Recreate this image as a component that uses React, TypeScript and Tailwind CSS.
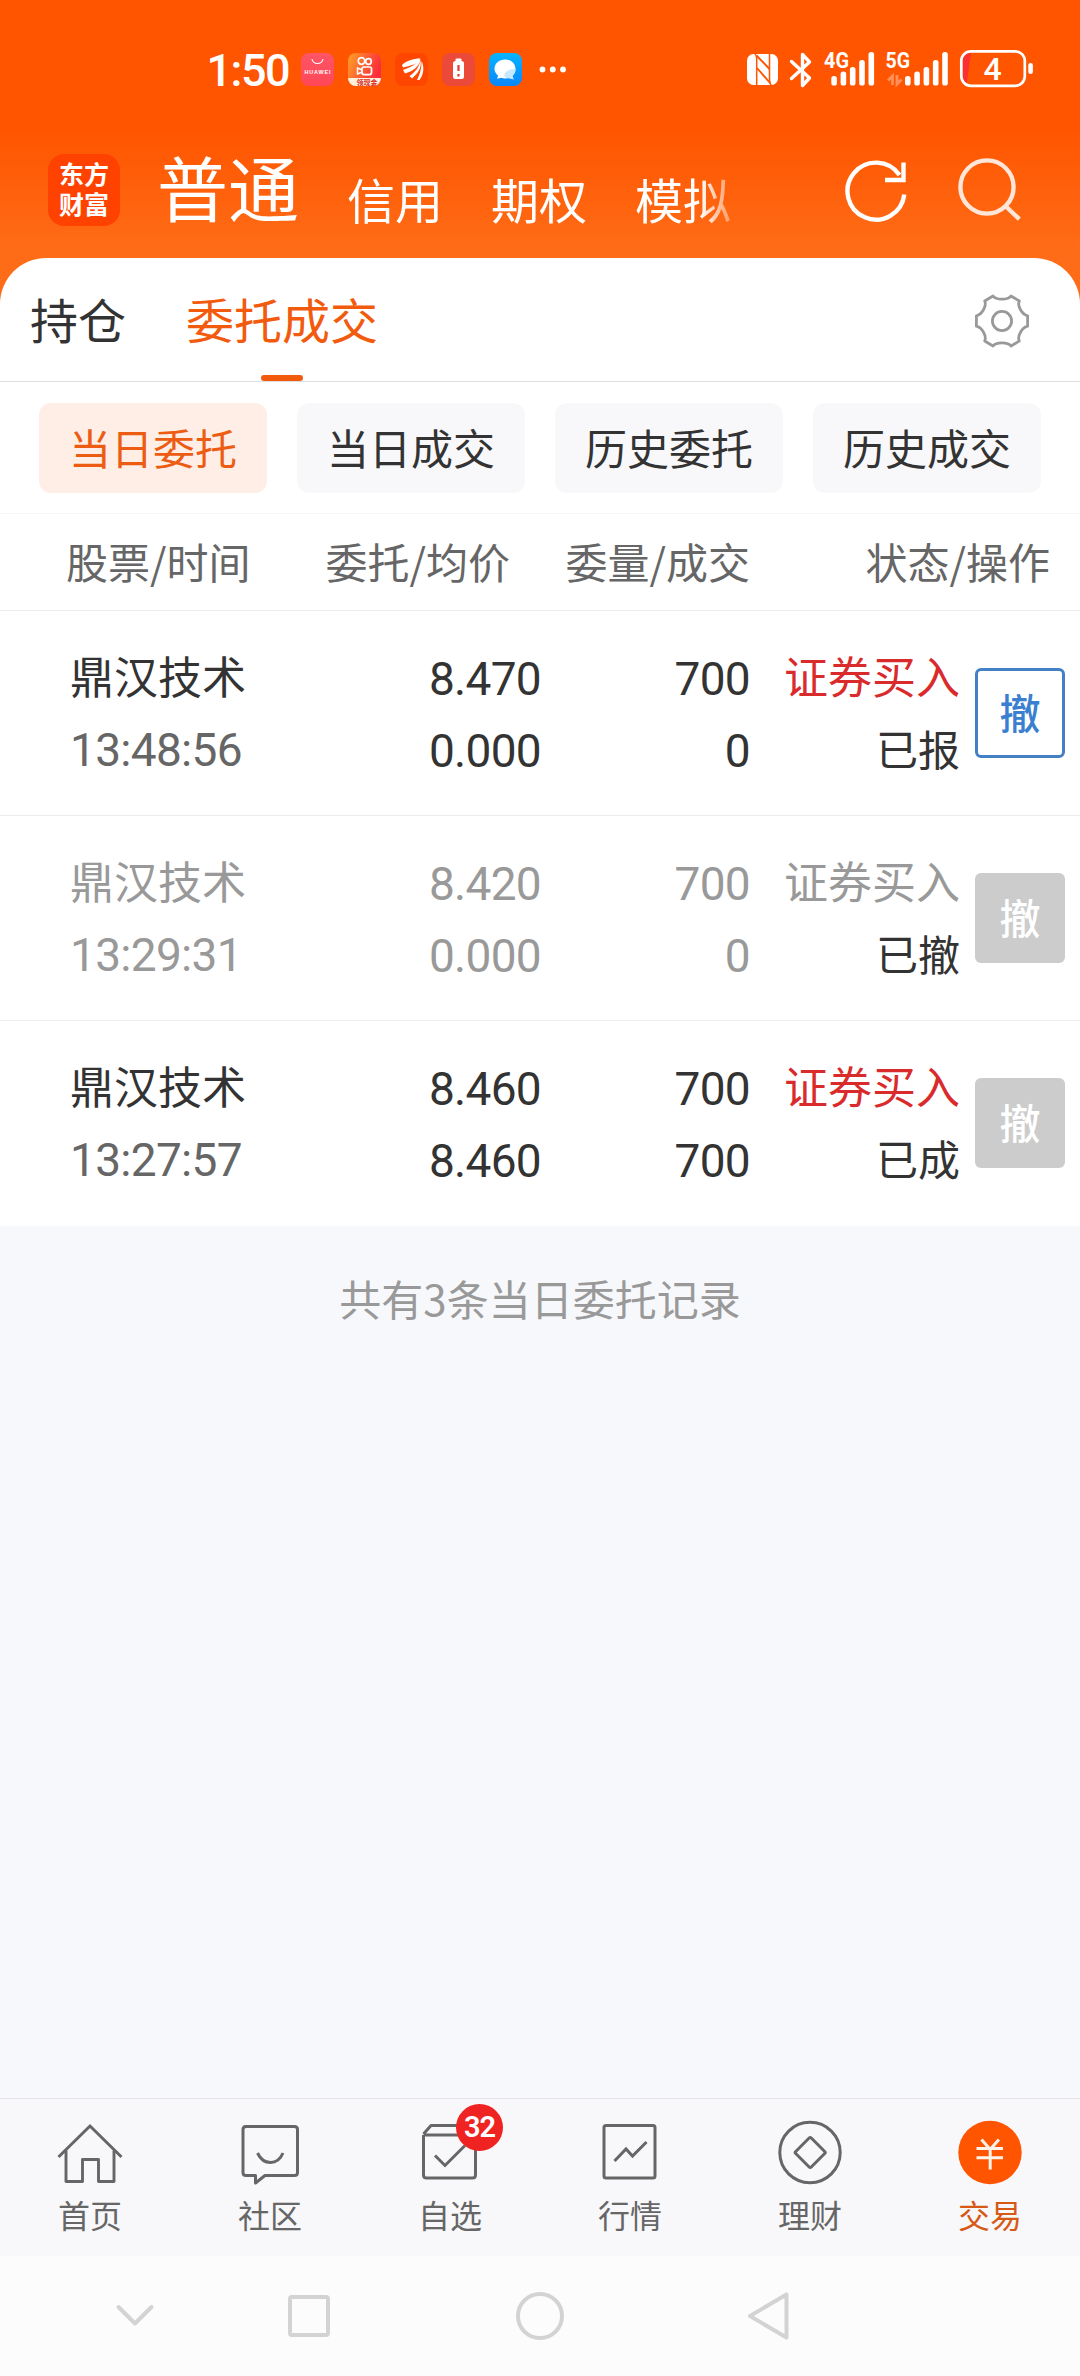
import React from "react";

function StatusIcons() {
  return (
    <svg width="390" height="70" viewBox="190 35 390 70" className="block" fill="none">
      <defs>
        <linearGradient id="hw" x1="0" y1="0" x2="0" y2="1">
          <stop offset="0" stopColor="#ff5566" />
          <stop offset="1" stopColor="#ff4757" />
        </linearGradient>
        <linearGradient id="ks" x1="0" y1="0" x2="1" y2="0.4">
          <stop offset="0" stopColor="#ffa126" />
          <stop offset="1" stopColor="#fb2b3c" />
        </linearGradient>
        <linearGradient id="msg" x1="0" y1="0" x2="0" y2="1">
          <stop offset="0" stopColor="#08b4ff" />
          <stop offset="1" stopColor="#0a86fb" />
        </linearGradient>
      </defs>
      <rect x="301" y="53" width="33" height="33" rx="8" fill="url(#hw)" />
      <path d="M312 59a5.6 5.6 0 0 0 11 0" stroke="#fff" strokeWidth="1.1" />
      <text x="317.5" y="74" fontSize="5.4" fontWeight="700" fill="#fff" textAnchor="middle" textLength="26" fontFamily="Liberation Sans, sans-serif">HUAWEI</text>

      <clipPath id="ksclip"><rect x="348" y="53" width="33" height="33" rx="8" /></clipPath>
      <g clipPath="url(#ksclip)">
        <rect x="348" y="53" width="33" height="33" fill="url(#ks)" />
        <path d="M348 78h33v8h-33z" fill="#fff0dc" />
        <text x="367" y="84.5" fontSize="7" fontWeight="700" fill="#d6281e" textAnchor="middle" fontFamily="Noto Sans CJK SC, sans-serif">领现金</text>
      </g>
      <circle cx="361.500" cy="61" r="3.300" stroke="#fff" strokeWidth="1.700" />
      <circle cx="368.500" cy="61.500" r="2.800" stroke="#fff" strokeWidth="1.700" />
      <rect x="362" y="67" width="9.500" height="7.600" rx="2" stroke="#fff" strokeWidth="1.700" />
      <path d="M362 70l-4.500-2.200v6.400l4.500-2.200" stroke="#fff" strokeWidth="1.500" strokeLinejoin="round" />

      <rect x="395" y="53" width="33" height="33" rx="8" fill="#ff4600" />
      <path d="M402 65c4-4 11-6.500 18.500-6.500-1 5-9 7-17.500 9zM403 70c7-2.500 13-5.500 17.500-10.500-1 7-8 12-15.500 14zM409.500 76c6-4 9.500-9 11-15.500 1.500 7-2.500 13-8.500 18zM417 80c3-6 4.500-11 4.500-19 3.500 7 1.500 14-2 19z" fill="#fff" />

      <rect x="442" y="53" width="33" height="33" rx="8" fill="#ea4a37" />
      <rect x="455.500" y="58.500" width="6" height="3" rx="1" fill="#fff" />
      <rect x="453" y="61" width="11" height="18" rx="2.500" fill="#fff" />
      <path d="M458.500 65v6M458.500 74v2.500" stroke="#dc4030" strokeWidth="2.200" />

      <rect x="489" y="53" width="33" height="33" rx="8" fill="url(#msg)" />
      <path d="M505 59.500c6 0 10.500 4.100 10.500 9.500s-4.500 9.500-10.500 9.500c-1.500 0-2.500-.200-4-.700l-3.800 1 .8-3.300c-2-1.700-3.500-3.800-3.500-6.500 0-5.400 4.500-9.500 10.500-9.500z" fill="#fff" />
      <path d="M515.500 69c0 3-1 5-3 6.500l1.300 4-5.300-1.300c-3 .3-5-1.700-4-4.200s6-5.500 11-5z" fill="#c5e9ff" />
      <circle cx="542.500" cy="69.500" r="2.900" fill="#fff" />
      <circle cx="552.800" cy="69.500" r="2.900" fill="#fff" />
      <circle cx="563" cy="69.500" r="2.900" fill="#fff" />
      <text x="206.500" y="86" fontSize="45" fontWeight="500" fill="#fff" textLength="84" fontFamily="Roboto, sans-serif">1:50</text>
    </svg>
  );
}

const bars = [
  [0, 76],
  [9.3, 71.500],
  [18.600, 67],
  [27.900, 60],
  [37.200, 52],
];

function Signal({ x }: { x: number }) {
  return (
    <g fill="#fff">
      {bars.map(([dx, top]) => (
        <rect key={dx} x={x + dx} y={top} width="5.600" height={85.500 - top} rx="2.600" />
      ))}
    </g>
  );
}

function SignalIcons() {
  return (
    <svg width="300" height="70" viewBox="740 35 300 70" className="block" fill="none">
      <rect x="747" y="54" width="31" height="31" rx="6.500" fill="#fff" />
      <path d="M754.500 53.500Q756.700 55 756.700 60V85.500M769.500 53.500V79Q769.500 84 771.500 85.500" stroke="#ff5500" strokeWidth="1.500" />
      <path d="M756.500 55.500l13 13.500M757 68l13.500 15.500" stroke="#ff5500" strokeWidth="1.900" />
      <path d="M791.500 61.500l18 16.500-7 7.500v-31l7 7.500-18 16.500" stroke="#fff" strokeWidth="3.400" strokeLinejoin="round" strokeLinecap="round" />
      <text x="824" y="68" fontSize="21.500" fontWeight="700" fill="#fff" textLength="25" lengthAdjust="spacingAndGlyphs" fontFamily="Roboto, sans-serif">4G</text>
      <Signal x={831.300} />
      <text x="885.500" y="68" fontSize="21.500" fontWeight="700" fill="#fff" textLength="24.500" lengthAdjust="spacingAndGlyphs" fontFamily="Roboto, sans-serif">5G</text>
      <path d="M892.500 85v-9l-4.500 4.500M897 75v9l4.500-4.500" stroke="#fff" strokeOpacity=".35" strokeWidth="2.800" />
      <Signal x={905} />
      <path d="M971 53h-1q-7.500 0-7.500 7.500v17q0 7.500 4 7.500z" fill="#fb3030" />
      <rect x="961.300" y="51.300" width="63.500" height="34.500" rx="9.500" stroke="#fff" strokeWidth="2.700" />
      <rect x="1028.300" y="63" width="4.600" height="11" rx="2.200" fill="#fff" />
      <text x="992.500" y="80" fontSize="32" fontWeight="500" fill="#fff" textAnchor="middle" fontFamily="Roboto, sans-serif">4</text>
    </svg>
  );
}

function RefreshIcon() {
  return (
    <svg width="66" height="66" viewBox="843 158 66 66" fill="none" stroke="#fff" strokeWidth="4.400">
      <path d="M904.300 194.500A28.500 28.500 0 1 1 899.500 175" />
      <path d="M903.500 162.500V180H885" />
    </svg>
  );
}

function SearchIcon() {
  return (
    <svg width="66" height="66" viewBox="956 156 66 66" fill="none" stroke="#ffe6d8" strokeWidth="4.400">
      <circle cx="987" cy="187" r="26.600" />
      <path d="M1006 206.500l13.300 12.700" />
    </svg>
  );
}

function GearIcon() {
  return (
    <svg width="58" height="58" viewBox="-29 -29 58 58" fill="none" stroke="#999" strokeWidth="2.800" strokeLinejoin="round">
      <path d="M-17.300-20L-9-25C-6-20.800 6-20.800 9-25L17.300-20C15-15 20-6.500 25.600-5.200V5.200C20 6.500 15 15 17.300 20L9 25C6 20.800-6 20.800-9 25L-17.300 20C-15 15-20 6.500-25.600 5.200V-5.200C-20-6.500-15-15-17.300-20Z" />
      <circle r="9.600" />
    </svg>
  );
}

const accounts = ["信用", "期权"];
const filters = ["当日委托", "当日成交", "历史委托", "历史成交"];

type Order = {
  time: string;
  price: string;
  avg: string;
  qty: string;
  done: string;
  state: string;
  muted?: boolean;
  cancellable?: boolean;
};

const orders: Order[] = [
  { time: "13:48:56", price: "8.470", avg: "0.000", qty: "700", done: "0", state: "已报", cancellable: true },
  { time: "13:29:31", price: "8.420", avg: "0.000", qty: "700", done: "0", state: "已撤", muted: true },
  { time: "13:27:57", price: "8.460", avg: "8.460", qty: "700", done: "700", state: "已成" },
];

function OrderRow({ o, last }: { o: Order; last: boolean }) {
  const main = o.muted ? "text-[#999]" : "text-[#333]";
  const digits = "font-[Roboto,sans-serif] text-[46px] tracking-[-0.7px]";
  return (
    <div className={`flex h-[205px] bg-white text-[44px] leading-[72px] ${last ? "" : "border-b border-[#ededed]"}`}>
      <div className={`w-[300px] pt-[30px] pl-[70px] ${main}`}>
        <div className="leading-[69px]">鼎汉技术</div>
        <div className={`leading-[81px] ${digits} ${o.muted ? "" : "text-[#666]"}`}>{o.time}</div>
      </div>
      <div className={`w-[241px] pt-8 text-right ${digits} ${main}`}>
        <div>{o.price}</div>
        <div>{o.avg}</div>
      </div>
      <div className={`w-[209px] pt-8 text-right ${digits} ${main}`}>
        <div>{o.qty}</div>
        <div>{o.done}</div>
      </div>
      <div className="w-[210px] pt-7 text-right leading-[72.5px]">
        <div className={o.muted ? "text-[#999]" : "text-[#d92b2b]"}>证券买入</div>
        <div className="text-[42px] text-[#333]">{o.state}</div>
      </div>
      <button
        className={`mt-[57px] ml-[15px] flex size-[90px] items-center justify-center rounded-[6px] pb-1 text-[41px] font-medium ${
          o.cancellable ? "border-3 border-[#4380c6] text-[#3a7fd0]" : "bg-[#ccc] text-white"
        }`}
      >
        撤
      </button>
    </div>
  );
}

const line = { fill: "none", stroke: "#666", strokeWidth: 3, strokeLinejoin: "round" as const };

const tabs = [
  {
    label: "首页",
    icon: (
      <g {...line}>
        <path d="M3.500 41L35 10l31.500 31" transform="translate(0 2)" strokeLinejoin="miter" />
        <path d="M11 36.500V67.500H27.500V45.500H43.500V67.500H59V36.500" strokeWidth="2.900" />
      </g>
    ),
  },
  {
    label: "社区",
    icon: (
      <g {...line}>
        <path d="M9.500 12.500h50q3 0 3 3v43q0 3-3 3H30L20.500 69V61.500H11q-3 0-3-3v-43q0-3 3-3z" />
        <path d="M22.500 39q4.500 9.500 13 9.500T48 39" />
      </g>
    ),
  },
  {
    label: "自选",
    icon: (
      <g {...line}>
        <path d="M8.500 21v40q0 3 3 3h46q3 0 3-3V21M8.500 21h52M8.500 20l7.500-8.500h37l7.500 8.500" />
        <path d="M20 41.500l10 10L50 31.500" strokeLinejoin="miter" />
      </g>
    ),
  },
  {
    label: "行情",
    icon: (
      <g {...line}>
        <rect x="9" y="11.500" width="51" height="52.500" rx="2" />
        <path d="M19.500 47L31 35l6.500 7L51.500 28" strokeLinejoin="miter" />
      </g>
    ),
  },
  {
    label: "理财",
    icon: (
      <g {...line}>
        <circle cx="35" cy="38.500" r="30.200" />
        <rect x="24.200" y="27.500" width="22" height="22" rx="1.500" transform="rotate(45 35.200 38.500)" />
      </g>
    ),
  },
  {
    label: "交易",
    active: true,
    icon: (
      <g>
        <circle cx="35" cy="38.500" r="31.700" fill="#ff5500" />
        <path d="M26.500 25.500l8.700 10 8.700-10M35.200 35v20.500M21.500 34.500h26.500M21.500 43.700h26.500" fill="none" stroke="#fff3ea" strokeWidth="3" />
      </g>
    ),
  },
];

export default function App() {
  return (
    <div className="flex h-[2376px] w-[1080px] flex-col overflow-hidden bg-[#f7f8fb] font-['Noto_Sans_CJK_SC',sans-serif] text-[#333]">
      <div className="bg-[linear-gradient(180deg,#ff5500_0px,#ff5500_130px,#ff6c17_250px,#ff6c17_310px)]">
        <div className="flex h-[105px] items-end justify-between pr-10 pl-[190px]">
          <StatusIcons />
          <SignalIcons />
        </div>

        <header className="flex h-[153px] items-start pl-12 text-white">
          <div className="mt-[49px] size-[72px] rounded-[16px] bg-[#ff4200] pt-[4px] text-center text-[25px] leading-[30px] font-bold">
            <div>东方</div>
            <div>财富</div>
          </div>
          <div className="mt-[44px] ml-[37px] w-[144px] text-[71px] leading-[72px]">普通</div>
          <div className="mt-[63px] ml-[46px] flex w-[413px] gap-12 text-[48px] leading-[60px] whitespace-nowrap [mask-image:linear-gradient(90deg,#000_353px,transparent_400px)]">
            {accounts.map((a) => (
              <span key={a} className="w-24">{a}</span>
            ))}
            <span className="w-24">模拟</span>
          </div>
          <div className="mt-[53px] ml-[83px] flex gap-[47px]">
            <RefreshIcon />
            <div className="-mt-0.5">
              <SearchIcon />
            </div>
          </div>
        </header>

        <div className="flex h-[124px] rounded-t-[46px] border-b border-[#dedede] bg-white pl-[30px] text-[48px] leading-[121px]">
          <div className="w-24">持仓</div>
          <div className="relative ml-[60px] w-48 whitespace-nowrap text-[#f25a0e]">
            委托成交
            <span className="absolute bottom-0 left-[75px] h-1.5 w-[42px] rounded-full bg-[#f25a0e]" />
          </div>
          <div className="mt-[34px] mr-[49px] ml-auto">
            <GearIcon />
          </div>
        </div>
      </div>

      <div className="flex h-[132px] gap-[30px] border-b border-[#f5f5f5] bg-white px-[39px] pt-[21px]">
        {filters.map((f, i) => (
          <div
            key={f}
            className={`h-[90px] w-[228px] rounded-xl text-center text-[42px] leading-[87px] ${
              i === 0 ? "bg-[#feeee6] text-[#ec5c12]" : "bg-[#f8f8fa] text-[#333]"
            }`}
          >
            {f}
          </div>
        ))}
      </div>

      <div className="flex h-[97px] border-b border-[#ededed] bg-white text-[42px] leading-[93px] whitespace-nowrap text-[#666]">
        <div className="w-[300px] pl-[66px]">股票/时间</div>
        <div className="w-[210px] text-right">委托/均价</div>
        <div className="w-[240px] text-right">委量/成交</div>
        <div className="w-[300px] text-right">状态/操作</div>
      </div>

      {orders.map((o, i) => (
        <OrderRow key={o.time} o={o} last={i === orders.length - 1} />
      ))}

      <p className="mt-[42px] text-center text-[42px] leading-[60px] text-[#999]">共有3条当日委托记录</p>

      <nav className="mt-auto grid h-[158px] grid-cols-6 border-t border-[#e2e3e6] bg-[#f8f8fb]">
        {tabs.map((t, i) => (
          <div key={t.label} className="relative flex flex-col items-center pt-[15px]">
            <svg width="70" height="76" viewBox="0 0 70 76">{t.icon}</svg>
            <span className={`mt-[3px] text-[32px] leading-[42px] ${t.active ? "text-[#d65a16]" : "text-[#666]"}`}>{t.label}</span>
            {i === 2 && (
              <span className="absolute top-[5px] left-24 size-[47px] rounded-full bg-[#f02323] text-center font-[Roboto,sans-serif] text-[29px] leading-[47px] font-semibold tracking-[-1px] text-white">32</span>
            )}
          </div>
        ))}
      </nav>

      <div className="h-[120px] shrink-0 bg-[#fcfcfc]">
        <svg width="1080" height="120" viewBox="0 0 1080 120" fill="none" stroke="#d3d3d3" strokeWidth="4" strokeLinejoin="round" strokeLinecap="round" className="block">
          <path d="M118.500 51L135 67.500 151.500 51" />
          <rect x="290" y="41" width="38" height="38" rx="2" />
          <circle cx="540" cy="60" r="22" />
          <path d="M750 60L786.500 38.500V81.500Z" />
        </svg>
      </div>
    </div>
  );
}
